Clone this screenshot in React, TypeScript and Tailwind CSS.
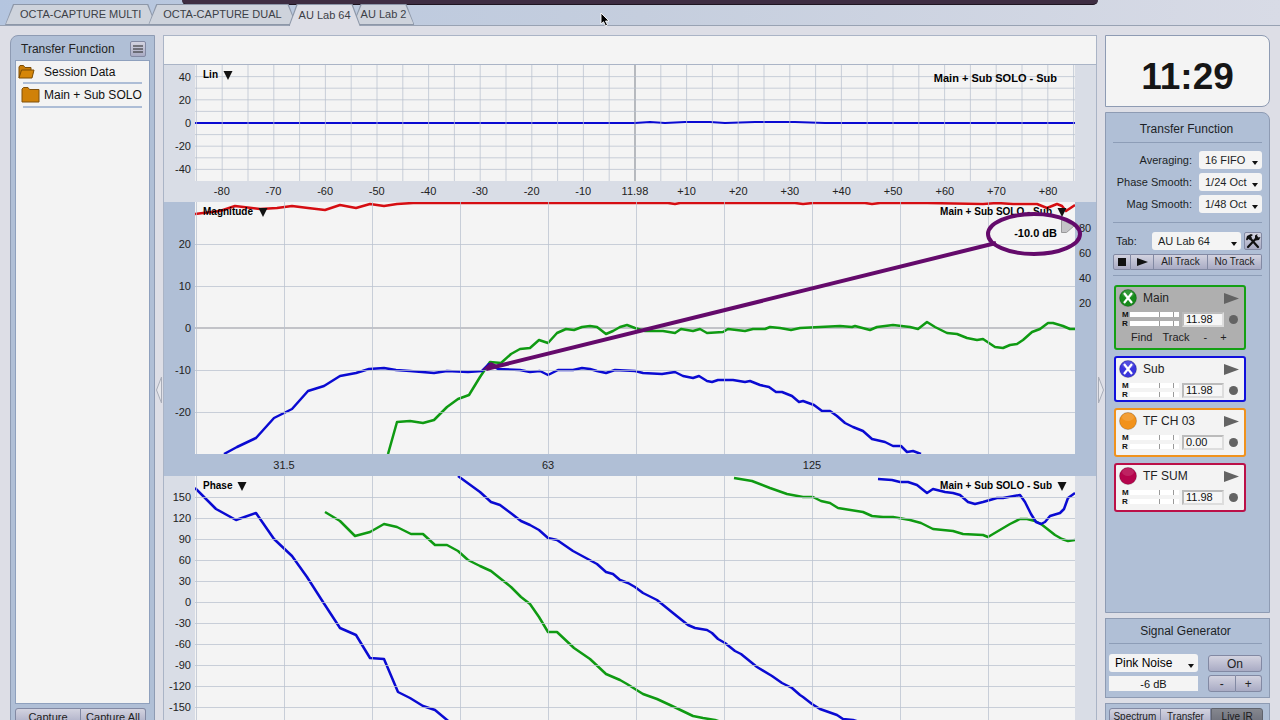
import type { ReactNode } from "react";
import clsx from "clsx";

type Point = [number, number];
type Trace = { color: string; points: Point[] };

const RED = "#d50d12";
const BLUE = "#0a0ad2";
const GREEN = "#0f9a12";
const PURPLE = "#640a6b";

const TABS = ["OCTA-CAPTURE MULTI", "OCTA-CAPTURE DUAL", "AU Lab 64", "AU Lab 2"];
const ACTIVE_TAB = "AU Lab 64";

const LIN_LEVELS = ["40", "20", "0", "-20", "-40"];
const LIN_TIMES = ["-80", "-70", "-60", "-50", "-40", "-30", "-20", "-10", "11.98", "+10", "+20", "+30", "+40", "+50", "+60", "+70", "+80"];
const MAG_LEVELS = ["20", "10", "0", "-10", "-20"];
const COHERENCE = ["80", "60", "40", "20"];
const PHASES = ["150", "120", "90", "60", "30", "0", "-30", "-60", "-90", "-120", "-150"];

// Plots are 880 units wide; lin is 116 tall, magnitude and phase are 252 tall.
const LIN_X = Array.from({ length: 35 }, (_, i) => 440 + (i - 17) * 25.8);
const LIN_Y = [-4, -3, -2, -1, 1, 2, 3, 4].map((step) => 58 + step * 11.6);
const FREQ_X = Array.from({ length: 10 }, (_, i) => 1.5 + i * 88);
const MAG_Y = [42.5, 84.5, 168.5, 210.5];
const PHASE_Y = Array.from({ length: 11 }, (_, i) => 21.5 + i * 21);

const LIN_TRACES: Trace[] = [
  {
    color: BLUE,
    points: [[0, 58], [440, 58], [455, 57], [470, 58], [490, 57], [515, 57], [530, 58], [560, 57], [600, 57], [630, 58], [880, 58]],
  },
];

const MAG_TRACES: Trace[] = [
  {
    color: RED,
    points: [[0, 12], [8, 11], [25, 9], [40, 4], [65, 7], [82, 6], [97, 4], [113, 6], [130, 8], [145, 3], [161, 6], [175, 2], [189, 4], [202, 2], [218, 1], [425, 1], [473, 1], [480, 2], [485, 1], [600, 1], [608, 2], [618, 1], [670, 1], [677, 2], [685, 1], [732, 1], [788, 2], [802, 1], [818, 2], [842, 2], [852, 6], [862, 2], [867, 4], [871, 9], [880, 3]],
  },
  {
    color: GREEN,
    points: [[193, 252], [202, 220], [215, 219], [228, 221], [239, 218], [252, 205], [263, 197], [274, 193], [285, 175], [295, 160], [306, 161], [316, 152], [325, 147], [335, 146], [344, 138], [353, 141], [362, 131], [371, 127], [379, 128], [387, 125], [395, 124], [402, 125], [411, 132], [418, 129], [425, 125], [432, 123], [440, 126], [450, 129], [468, 129], [480, 131], [486, 127], [498, 129], [505, 127], [512, 131], [528, 130], [533, 127], [550, 129], [558, 127], [570, 127], [575, 125], [585, 126], [596, 128], [605, 126], [645, 124], [657, 125], [660, 124], [675, 128], [682, 125], [698, 123], [715, 125], [723, 127], [732, 120], [740, 125], [752, 131], [762, 132], [772, 136], [782, 138], [788, 137], [800, 145], [808, 146], [815, 143], [822, 142], [828, 138], [837, 130], [845, 127], [853, 121], [858, 121], [868, 124], [875, 127], [880, 127]],
  },
  {
    color: BLUE,
    points: [[29, 252], [42, 245], [61, 236], [79, 216], [97, 207], [113, 189], [129, 184], [145, 174], [161, 171], [174, 167], [189, 166], [201, 168], [215, 169], [227, 170], [239, 171], [252, 169], [273, 170], [287, 169], [294, 162], [303, 167], [325, 168], [335, 170], [345, 169], [353, 173], [363, 168], [378, 168], [387, 166], [395, 167], [402, 169], [411, 171], [420, 168], [440, 169], [448, 171], [467, 172], [480, 170], [488, 174], [498, 176], [504, 174], [512, 179], [517, 180], [523, 178], [538, 178], [550, 180], [555, 179], [565, 183], [574, 185], [581, 190], [587, 190], [597, 194], [604, 200], [608, 199], [619, 203], [627, 209], [635, 209], [642, 214], [650, 221], [658, 225], [668, 229], [677, 237], [690, 240], [698, 244], [706, 244], [712, 250], [718, 249], [726, 252]],
  },
];

const PHASE_TRACES: Trace[] = [
  {
    color: GREEN,
    points: [[130, 36], [145, 45], [160, 60], [175, 56], [189, 48], [202, 51], [216, 58], [228, 58], [240, 69], [252, 69], [263, 75], [273, 84], [285, 90], [296, 95], [306, 103], [316, 111], [326, 121], [335, 128], [344, 141], [353, 156], [362, 156], [379, 172], [395, 183], [411, 198], [425, 204], [432, 208], [448, 218], [462, 223], [475, 229], [498, 240], [508, 242], [520, 244], [545, 252]],
  },
  {
    color: GREEN,
    points: [[539, 2], [557, 5], [575, 12], [592, 18], [608, 21], [618, 21], [626, 25], [635, 27], [643, 32], [668, 36], [677, 40], [688, 41], [698, 41], [715, 44], [726, 47], [738, 53], [758, 55], [768, 58], [788, 59], [793, 61], [815, 48], [825, 43], [832, 43], [840, 45], [846, 48], [860, 59], [867, 63], [873, 65], [880, 64]],
  },
  {
    color: BLUE,
    points: [[0, 12], [21, 33], [41, 44], [61, 37], [79, 63], [97, 80], [112, 101], [128, 126], [145, 152], [161, 159], [175, 182], [189, 183], [203, 216], [215, 222], [228, 230], [240, 234], [252, 244], [262, 252]],
  },
  {
    color: BLUE,
    points: [[263, 0], [285, 16], [296, 26], [305, 29], [317, 38], [326, 45], [335, 49], [344, 54], [353, 62], [362, 64], [378, 75], [402, 88], [411, 96], [418, 98], [425, 104], [433, 107], [440, 111], [448, 117], [462, 124], [478, 137], [493, 149], [500, 152], [512, 154], [517, 157], [523, 163], [530, 167], [540, 175], [546, 178], [562, 191], [577, 200], [587, 207], [597, 212], [605, 219], [608, 221], [617, 228], [625, 233], [642, 239], [648, 243], [658, 244], [685, 252]],
  },
  {
    color: BLUE,
    points: [[683, 3], [697, 4], [705, 6], [713, 6], [722, 9], [732, 17], [738, 13], [750, 16], [758, 17], [765, 19], [773, 26], [780, 28], [788, 26], [802, 22], [808, 22], [825, 19], [830, 26], [836, 38], [841, 46], [846, 48], [850, 46], [855, 40], [865, 37], [869, 33], [873, 22], [880, 17]],
  },
];

type Channel = {
  name: string;
  delay: string;
  color: string;
  card: string;
  live?: boolean;
  selected?: boolean;
};

const CHANNELS: Channel[] = [
  { name: "Main", delay: "11.98", color: "#168a1b", card: "border-[#14a014] bg-[#afafaf] pb-px", live: true, selected: true },
  { name: "Sub", delay: "11.98", color: "#3a35dc", card: "border-[#1010dc] bg-[#f3f3f3] pb-px", live: true },
  { name: "TF CH 03", delay: "0.00", color: "#f2921b", card: "border-[#f0921c] bg-[#f3f3f3] pb-1" },
  { name: "TF SUM", delay: "11.98", color: "#b5044c", card: "border-[#bb1048] bg-[#f3f3f3] pb-1" },
];

const BUTTON = "flex items-center justify-center border-[#8289a3] bg-linear-to-b from-[#d3d3e0] to-[#a9abc4] text-[#222]";

function Tab({ label }: { label: string }) {
  const active = label === ACTIVE_TAB;
  return (
    <button
      type="button"
      className={clsx(
        "relative -ml-2 bg-[#8d97a8] px-px pt-px text-[11px] text-[#3c4046] [clip-path:polygon(0_100%,8px_0,calc(100%-8px)_0,100%_100%)]",
        active ? "z-10 -mb-px h-[22px]" : "h-[21px] pb-px",
      )}
    >
      <span
        className={clsx(
          "flex h-full items-center [clip-path:polygon(0_100%,8px_0,calc(100%-8px)_0,100%_100%)]",
          active && "bg-[#dddee6] px-[9px]",
          !active && "bg-[#ced3dc]",
          !active && (label.startsWith("OCTA") ? "px-[14px]" : "px-[7px]"),
        )}
      >
        {label}
      </span>
    </button>
  );
}

function Plot({
  height,
  xs,
  ys,
  traces,
  width,
  children,
}: {
  height: number;
  xs: number[];
  ys: number[];
  traces: Trace[];
  width: number;
  children?: ReactNode;
}) {
  return (
    <svg viewBox={`0 0 880 ${height}`} preserveAspectRatio="none" className="block size-full bg-[#f4f4f4]" aria-hidden>
      {children}
      {traces.map((trace, i) => (
        <polyline
          key={i}
          points={trace.points.map((p) => p.join(",")).join(" ")}
          fill="none"
          stroke={trace.color}
          strokeWidth={width}
          strokeLinejoin="round"
          vectorEffect="non-scaling-stroke"
        />
      ))}
      <g stroke="#b9c1cf" strokeOpacity={0.75}>
        {xs.map((x) => (
          <line key={x} x1={x} x2={x} y1={0} y2={height} vectorEffect="non-scaling-stroke" />
        ))}
        {ys.map((y) => (
          <line key={y} x1={0} x2={880} y1={y} y2={y} vectorEffect="non-scaling-stroke" />
        ))}
      </g>
    </svg>
  );
}

function LeftAxis({ labels, className }: { labels: string[]; className?: string }) {
  return (
    <div className={clsx("flex w-[31px] shrink-0 flex-col pr-1 text-right text-[11px] leading-3 text-[#222]", className)}>
      {labels.map((label) => (
        <div key={label} className="flex flex-1 items-center justify-end">
          {label}
        </div>
      ))}
    </div>
  );
}

function PlotTitles({ kind }: { kind: string }) {
  return (
    <div className="absolute inset-x-0 top-1 flex justify-between px-2 text-[10px] leading-3 font-bold text-black">
      <button type="button" className="flex items-center gap-[5px]">
        {kind}
        <DownMark />
      </button>
      <button type="button" className="flex items-center gap-[5px]">
        Main + Sub SOLO - Sub
        <DownMark />
      </button>
    </div>
  );
}

function DownMark() {
  return (
    <svg viewBox="0 0 10 9" className="h-[9px] w-[10px]" aria-hidden>
      <path d="M0.500 0h9L5 9z" fill="#111" />
    </svg>
  );
}

function Select({ label, value, className }: { label: string; value: string; className: string }) {
  return (
    <div className={clsx("relative", className)}>
      <select
        aria-label={label}
        defaultValue={value}
        className="block h-[18px] w-full appearance-none rounded-[3px] bg-[#f4f4f4] pl-[6px] text-inherit leading-[18px] text-[#111]"
      >
        <option>{value}</option>
      </select>
      <svg viewBox="0 0 6 4" className="pointer-events-none absolute right-1 bottom-1 h-1 w-[6px]" aria-hidden>
        <path d="M0 0h6L3 4z" fill="#111" />
      </svg>
    </div>
  );
}

function Smoothing({ label, value }: { label: string; value: string }) {
  return (
    <div className="flex items-center justify-end gap-[7px] text-[11px] whitespace-nowrap text-[#1c1f26]">
      <span>{label}:</span>
      <Select label={label} value={value} className="w-[63px]" />
    </div>
  );
}

function Meter({ label }: { label: string }) {
  return (
    <div className="flex h-[9px] items-center">
      <span className="w-[8px] text-[8px] leading-[9px] font-bold text-[#111]">{label}</span>
      <span className="flex h-[5px] flex-1 bg-white pl-[29px]">
        <span className="w-[15px] border-x border-[#9a9a9a]" />
      </span>
    </div>
  );
}

function ChannelCard({ channel }: { channel: Channel }) {
  return (
    <section className={clsx("w-[132px] rounded-[3px] border-2 pt-[2px] pr-[5px] pl-[3px]", channel.card)}>
      <div className="flex h-[18px] items-center">
        <svg viewBox="0 0 18 18" className="size-[18px]" aria-hidden>
          <circle cx="9" cy="9" r="8.500" fill={channel.color} stroke="#0003" />
          <ellipse cx="9" cy="5" rx="6" ry="4" fill="#fff" fillOpacity={0.12} />
          {channel.live && <path d="M5 4l8 10M13 4L5 14" stroke="#fff" strokeWidth="2.200" />}
        </svg>
        <span className="ml-[6px] flex-1 text-[12px] text-[#222]">{channel.name}</span>
        <button type="button" aria-label={`Run ${channel.name}`}>
          <svg viewBox="0 0 15 11" className="h-[11px] w-[15px]" aria-hidden>
            <path d="M0 0l15 5.500L0 11z" fill="#636363" />
          </svg>
        </button>
      </div>
      <div className="mt-[3px] flex h-[18px] items-center pl-[3px]">
        <div className="w-[57px]">
          <Meter label="M" />
          <Meter label="R" />
        </div>
        <input
          aria-label={`${channel.name} delay`}
          defaultValue={channel.delay}
          className="ml-[3px] h-[15px] w-[42px] border-2 border-t-[#bbb] border-r-[#ddd] border-b-[#ddd] border-l-[#bbb] bg-[#f6f6f6] pl-[2px] text-[11px] text-[#111]"
        />
        <span className="ml-[5px] size-[9px] rounded-full bg-[#636363]" />
      </div>
      {channel.selected && (
        <div className="flex h-[19px] items-center pl-[12px] text-[11px] text-[#222]">
          <button type="button">Find</button>
          <button type="button" className="ml-[10px]">Track</button>
          <button type="button" className="ml-[14px]">-</button>
          <button type="button" className="ml-[13px]">+</button>
        </div>
      )}
    </section>
  );
}

function SessionPanel() {
  return (
    <aside className="flex w-[145px] shrink-0 flex-col rounded-tl-lg border border-[#8e9bb3] bg-[#b0bfd6] px-1 pb-px">
      <header className="flex h-6 items-center justify-between pt-[2px] pr-[4px] pl-[6px] text-[12px] text-[#222]">
        Transfer Function
        <button type="button" aria-label="Session menu" className={clsx(BUTTON, "size-4 rounded-[2px] border")}>
          <svg viewBox="0 0 10 8" className="h-2 w-[10px]" aria-hidden>
            <path d="M0 1h10M0 4h10M0 7h10" stroke="#222" strokeWidth="1.200" />
          </svg>
        </button>
      </header>
      <ul className="flex-1 border border-[#8ea0bd] bg-[#f3f3f3] text-[12px] text-[#111]">
        <li className="mr-[8px] ml-[2px] flex h-[21px] items-center">
          <svg viewBox="0 0 17 14" className="h-[14px] w-[17px]" aria-hidden>
            <path d="M1 13V2l1-1.500h3.500L7 2.500h6V5" fill="#c97d08" stroke="#7c4c04" />
            <path d="M1 13L3.500 5H16l-2 8z" fill="#d58609" stroke="#7c4c04" strokeLinejoin="round" />
          </svg>
          <span className="ml-[9px]">Session Data</span>
        </li>
        <li className="mr-[7px] ml-[7px] flex h-[26px] items-center border-y-2 border-[#adbdd6] whitespace-nowrap">
          <svg viewBox="0 0 19 16" className="-ml-[2px] h-4 w-[19px] shrink-0" aria-hidden>
            <path d="M1 15V2l1.500-1.500H7L8.500 2.500H18V15z" fill="#d08108" stroke="#80500a" strokeLinejoin="round" />
          </svg>
          <span className="ml-1">Main + Sub SOLO</span>
        </li>
      </ul>
      <div className="mt-1 mr-1 flex h-[18px] text-[11px]">
        <button type="button" className={clsx(BUTTON, "flex-1 rounded-l-[3px] border")}>Capture</button>
        <button type="button" className={clsx(BUTTON, "flex-1 rounded-r-[3px] border border-l-0 whitespace-nowrap")}>Capture All</button>
      </div>
    </aside>
  );
}

function LinChart() {
  return (
    <div className="border-t border-[#aab4c6] bg-[#d9dde6]">
      <div className="flex h-[116px]">
        <LeftAxis labels={LIN_LEVELS} />
        <div className="relative min-w-0 flex-1">
          <Plot height={116} xs={LIN_X} ys={LIN_Y} traces={LIN_TRACES} width={2}>
            <line x1={440} x2={440} y1={0} y2={116} stroke="#777" vectorEffect="non-scaling-stroke" />
          </Plot>
          <div className="absolute inset-x-0 top-1 flex justify-between pr-[18px] pl-2 text-[10px] font-bold text-black">
            <button type="button" className="flex h-3 items-center gap-[5px]">
              Lin
              <DownMark />
            </button>
            <span className="text-[11px] leading-[18px]">Main + Sub SOLO - Sub</span>
          </div>
        </div>
        <div className="w-[21px] shrink-0" />
      </div>
      <div className="flex h-[21px] items-center pr-[22px] pl-8 text-[11px] text-[#222]">
        {LIN_TIMES.map((time) => (
          <span key={time} className="flex-1 text-center">{time}</span>
        ))}
      </div>
    </div>
  );
}

function MagnitudeChart() {
  return (
    <div className="bg-[#b0bfd6]">
      <div className="relative flex h-[252px]">
        <LeftAxis labels={MAG_LEVELS} className="py-[21px]" />
        <div className="relative min-w-0 flex-1">
          <Plot height={252} xs={FREQ_X} ys={MAG_Y} traces={MAG_TRACES} width={2.5}>
            <line x1={0} x2={880} y1={126} y2={126} stroke="#c2c3c8" strokeWidth={2} vectorEffect="non-scaling-stroke" />
          </Plot>
          <PlotTitles kind="Magnitude" />
          <div className="absolute top-[15px] right-0 flex items-end gap-1 text-[11px] leading-none font-bold text-black">
            <span className="pt-[11px]">-10.0 dB</span>
            <svg viewBox="0 0 14 20" className="h-5 w-[14px] self-start" aria-hidden>
              <path d="M0.500 2.500v13h5L13 9z" fill="#c4c4c6" stroke="#999" />
            </svg>
          </div>
        </div>
        <div className="flex w-[21px] shrink-0 flex-col pt-[14px] pl-1 text-[11px] text-[#222]">
          {COHERENCE.map((label) => (
            <span key={label} className="flex h-[25px] items-center">{label}</span>
          ))}
        </div>
        <svg viewBox="0 0 932 252" preserveAspectRatio="none" className="pointer-events-none absolute inset-0 size-full" aria-hidden>
          <g fill="none" stroke={PURPLE} strokeWidth={4}>
            <path d="M322 167L832 41" />
            <path d="M318 168l9-8 8 4z" fill={PURPLE} stroke="none" />
            <ellipse cx="870" cy="32" rx="46" ry="20" />
          </g>
        </svg>
      </div>
      <div className="grid h-[22px] grid-cols-10 items-center pr-5 pl-8 text-center text-[11px] text-[#222]">
        <span className="col-span-2">31.5</span>
        <span className="col-span-2 col-start-4">63</span>
        <span className="col-span-2 col-start-7">125</span>
      </div>
    </div>
  );
}

function PhaseChart() {
  return (
    <div className="flex h-[252px] shrink-0 bg-[#d9dde6]">
      <LeftAxis labels={PHASES} className="py-[11px]" />
      <div className="relative min-w-0 flex-1">
        <Plot height={252} xs={FREQ_X} ys={PHASE_Y} traces={PHASE_TRACES} width={2.5} />
        <PlotTitles kind="Phase" />
      </div>
      <div className="w-[21px] shrink-0" />
    </div>
  );
}

function CollapseHandle({ side }: { side: "left" | "right" }) {
  return (
    <button type="button" aria-label={`Collapse ${side} panel`} className="flex w-2 shrink-0 items-center justify-center pt-4">
      <svg viewBox="0 0 6 28" className="h-7 w-[6px]" aria-hidden>
        <path d={side === "left" ? "M5.500 1v26L0.500 14z" : "M0.500 1v26L5.500 14z"} fill="#e6e7ec" stroke="#a9adb8" />
      </svg>
    </button>
  );
}

function ControlPanel() {
  return (
    <aside className="flex w-[165px] shrink-0 flex-col gap-[5px]">
      <div className="flex h-[72px] items-center justify-center rounded-r-lg border border-[#8e9bb3] bg-[#f4f4f4] pt-[10px] text-[37px] font-bold text-[#161616]">
        11:29
      </div>

      <div className="flex-1 rounded-tr-lg border border-[#8e9bb3] bg-[#b0bfd6] px-[7px]">
        <h2 className="flex h-[30px] items-center justify-center border-b border-[#8d9db7] pt-[3px] pr-[2px] text-[12px] text-[#1c1f26]">
          Transfer Function
        </h2>
        <div className="flex flex-col gap-1 border-b border-[#8d9db7] pt-[8px] pb-[9px]">
          <Smoothing label="Averaging" value="16 FIFO" />
          <Smoothing label="Phase Smooth" value="1/24 Oct" />
          <Smoothing label="Mag Smooth" value="1/48 Oct" />
        </div>
        <div className="border-b border-[#8d9db7] pt-[9px] pb-[5px]">
          <div className="flex items-center pl-[3px] text-[11px] text-[#1c1f26]">
            <span className="flex-1">Tab:</span>
            <Select label="Tab" value="AU Lab 64" className="w-[89px]" />
            <button type="button" aria-label="Tab settings" className={clsx(BUTTON, "ml-[3px] size-[18px] rounded-[2px] border")}>
              <svg viewBox="0 0 16 16" className="size-4" aria-hidden>
                <path d="M3 14L12 4.500M4.500 4.500L13 14" stroke="#111" strokeWidth="2.200" strokeLinecap="round" />
                <path d="M1 6.500L2 3l4-2 2 1-2 1.500 1 1.500-2 2-1.500-1L2 7.500z" fill="#111" />
                <path d="M10 5.500L10 2.500l2.500-1.500-.5 2 1.500 1.500 2-.5-1.500 3-3 .5z" fill="#111" />
              </svg>
            </button>
          </div>
          <div className="mt-[4px] flex h-4 text-[10px]">
            <button type="button" aria-label="Stop" className={clsx(BUTTON, "w-[18px] rounded-l-[2px] border")}>
              <span className="size-2 bg-[#111]" />
            </button>
            <button type="button" aria-label="Play" className={clsx(BUTTON, "w-[23px] border-y border-r")}>
              <svg viewBox="0 0 11 8" className="h-2 w-[11px]" aria-hidden>
                <path d="M0 0l11 4L0 8z" fill="#111" />
              </svg>
            </button>
            <button type="button" className={clsx(BUTTON, "flex-1 border-y border-r")}>All Track</button>
            <button type="button" className={clsx(BUTTON, "flex-1 rounded-r-[2px] border-y border-r")}>No Track</button>
          </div>
        </div>
        <div className="mt-[9px] flex flex-col gap-[6px] pl-px">
          {CHANNELS.map((channel) => (
            <ChannelCard key={channel.name} channel={channel} />
          ))}
        </div>
      </div>

      <div className="h-20 border border-[#8e9bb3] bg-[#b0bfd6] pr-[7px] pl-[3px]">
        <h2 className="flex h-[25px] items-center justify-center border-b border-[#8d9db7] text-[12px] text-[#1c1f26]">
          Signal Generator
        </h2>
        <div className="mt-[10px] flex justify-between">
          <div className="w-[89px]">
            <Select label="Signal type" value="Pink Noise" className="text-[12px]" />
            <input
              aria-label="Signal level"
              defaultValue="-6 dB"
              className="mt-1 block h-[15px] w-full bg-[#f4f4f4] text-center text-[11px] text-[#111]"
            />
          </div>
          <div className="w-[54px] text-[12px]">
            <button type="button" className={clsx(BUTTON, "mt-px h-[17px] w-full rounded-[3px] border")}>On</button>
            <div className="mt-[3px] flex h-[17px]">
              <button type="button" aria-label="Level down" className={clsx(BUTTON, "flex-1 rounded-l-[3px] border")}>-</button>
              <button type="button" aria-label="Level up" className={clsx(BUTTON, "flex-1 rounded-r-[3px] border border-l-0")}>+</button>
            </div>
          </div>
        </div>
      </div>

      <div className="flex h-[25px] border border-[#8e9bb3] bg-[#b0bfd6] pt-1 pr-[6px] pb-px pl-[3px] text-[10px]">
        <button type="button" className={clsx(BUTTON, "flex-1 rounded-l-[3px] border")}>Spectrum</button>
        <button type="button" className={clsx(BUTTON, "flex-1 border-y border-r")}>Transfer</button>
        <button type="button" className="flex flex-1 items-center justify-center rounded-r-[3px] border border-[#60636d] bg-linear-to-b from-[#85878f] to-[#6b6d78] text-[#1a1a1a]">
          Live IR
        </button>
      </div>
    </aside>
  );
}

export default function App() {
  return (
    <div className="relative flex h-screen flex-col overflow-hidden bg-[#dddee6] font-['Liberation_Sans',Arial,sans-serif] leading-none">
      <div className="absolute top-0 right-[182px] left-[182px] h-[5px] rounded-b-md border-b border-[#1e1420] bg-[#3e2d42]" />
      <nav className="flex h-[26px] shrink-0 items-end border-b border-[#98a2b3] bg-linear-to-r from-[#b4c5df] via-[#c5cede] to-[#d8dbe6] pl-[13px]">
        {TABS.map((tab) => (
          <Tab key={tab} label={tab} />
        ))}
      </nav>
      <svg viewBox="0 0 10 15" className="absolute top-[12px] left-[600px] h-[15px] w-[10px]" aria-hidden>
        <path d="M1 1v11l2.500-2.300L5.500 14l2-1-2-4H9z" fill="#000" stroke="#fff" strokeWidth="0.900" />
      </svg>

      <div className="-mb-2 flex min-h-0 flex-1 px-[10px] pt-[9px]">
        <SessionPanel />
        <CollapseHandle side="left" />
        <main className="flex min-w-0 flex-1 flex-col border border-b-0 border-[#aab4c6]">
          <div className="h-[28px] shrink-0 bg-[#f4f4f4]" />
          <LinChart />
          <MagnitudeChart />
          <PhaseChart />
        </main>
        <CollapseHandle side="right" />
        <ControlPanel />
      </div>
    </div>
  );
}
